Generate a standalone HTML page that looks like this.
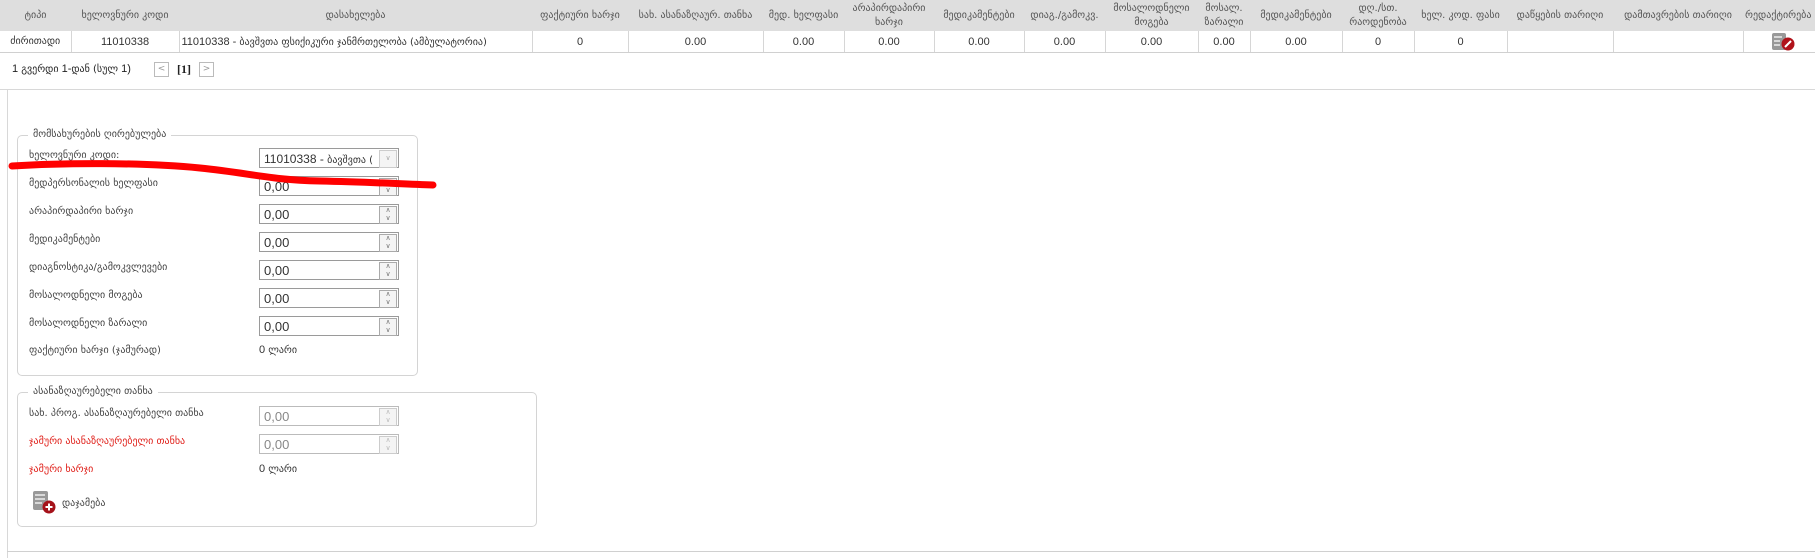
<!DOCTYPE html>
<html><head><meta charset="utf-8"><style>
body{margin:0;width:1815px;height:558px;background:#fff;font-family:"DejaVu Sans","Liberation Sans",sans-serif;position:relative;overflow:hidden;color:#333}
.a{position:absolute}
table{position:absolute;left:0;top:0;border-collapse:collapse;table-layout:fixed;width:1815px}
th{background:#dedede;color:#555;font-weight:normal;font-size:10px;height:31px;padding:0 2px;text-align:center;line-height:14px;overflow:hidden;white-space:nowrap}
td{height:21px;border-right:1px solid #d6d6d6;border-bottom:1px solid #d0d0d0;font-size:11px;text-align:center;padding:0 2px;white-space:nowrap;overflow:hidden;font-family:"Liberation Sans","DejaVu Sans",sans-serif}
td.g{font-family:"DejaVu Sans",sans-serif;font-size:10px}
.fs{position:absolute;border:1px solid #d4d4d4;border-radius:5px}
.lg{position:absolute;background:#fff;padding:0 5px;font-size:10px;color:#444}
.lb{position:absolute;font-size:10px;color:#444;left:29px}
.in{position:absolute;left:259px;width:134px;height:18px;border:1px solid #9a9a9a;font:13px "Liberation Sans",sans-serif;color:#333;line-height:20px;padding-left:4px;box-sizing:content-box}
.sp{position:absolute;right:1px;top:1px;width:16px;height:16px;border:1px solid #aaa;background:#f4f4f4;font-size:7px;line-height:8px;text-align:center;color:#777}
.dis{color:#888;border-color:#bbb}
</style></head><body>
<table>
<colgroup><col style="width:71px"><col style="width:108px"><col style="width:353px"><col style="width:96px"><col style="width:135px"><col style="width:81px"><col style="width:90px"><col style="width:90px"><col style="width:81px"><col style="width:93px"><col style="width:52px"><col style="width:92px"><col style="width:72px"><col style="width:93px"><col style="width:106px"><col style="width:130px"><col style="width:72px"></colgroup>
<tr><th>ტიპი</th><th>ხელოვნური კოდი</th><th>დასახელება</th><th>ფაქტიური ხარჯი</th><th>სახ. ასანაზღაურ. თანხა</th><th>მედ. ხელფასი</th><th>არაპირდაპირი<br>ხარჯი</th><th>მედიკამენტები</th><th>დიაგ./გამოკვ.</th><th>მოსალოდნელი<br>მოგება</th><th>მოსალ.<br>ზარალი</th><th>მედიკამენტები</th><th>დღ./სთ.<br>რაოდენობა</th><th>ხელ. კოდ. ფასი</th><th>დაწყების თარიღი</th><th>დამთავრების თარიღი</th><th style="text-align:left">რედაქტირება</th></tr>
<tr><td class="g">ძირითადი</td><td>11010338</td><td style="text-align:left">11010338 - <span style="font-family:'DejaVu Sans';font-size:10px">ბავშვთა ფსიქიკური ჯანმრთელობა (ამბულატორია)</span></td><td>0</td><td>0.00</td><td>0.00</td><td>0.00</td><td>0.00</td><td>0.00</td><td>0.00</td><td>0.00</td><td>0.00</td><td>0</td><td>0</td><td></td><td></td><td style="border-right:none"></td></tr>
</table>
<svg class="a" style="left:1771px;top:32px" width="24" height="19"><rect x="1" y="1" width="14" height="17" rx="2" fill="#999"/><g stroke="#eee" stroke-width="1.5"><line x1="3" y1="5" x2="11" y2="5"/><line x1="3" y1="9" x2="9" y2="9"/><line x1="3" y1="13" x2="9" y2="13"/></g><circle cx="17" cy="12" r="6.5" fill="#b0121a"/><line x1="14" y1="15" x2="20" y2="9" stroke="#fff" stroke-width="2"/></svg>
<div class="a" style="left:12px;top:63px;font-size:11px;font-family:'Liberation Sans','DejaVu Sans',sans-serif;color:#222">1 <span style="font-family:'DejaVu Sans';font-size:10px">გვერდი</span> 1-<span style="font-family:'DejaVu Sans';font-size:10px">დან (სულ</span> 1)</div>
<div class="a" style="left:154px;top:62px;width:13px;height:13px;border:1px solid #bbb;font-size:9px;color:#999;text-align:center;line-height:13px">&lt;</div>
<div class="a" style="left:177px;top:62px;font:bold 12px 'Liberation Serif',serif;color:#222">[1]</div>
<div class="a" style="left:199px;top:62px;width:13px;height:13px;border:1px solid #bbb;font-size:9px;color:#999;text-align:center;line-height:13px">&gt;</div>
<div class="a" style="left:0;top:89px;width:1815px;height:1px;background:#d8d8d8"></div>
<div class="a" style="left:7px;top:90px;width:1px;height:468px;background:#d8d8d8"></div>
<div class="a" style="left:7px;top:551px;width:1808px;height:1px;background:#d0d0d0"></div>

<div class="fs" style="left:17px;top:135px;width:399px;height:239px"></div>
<div class="lg" style="left:28px;top:129px">მომსახურების ღირებულება</div>
<div class="lb" style="top:150px">ხელოვნური კოდი:</div>
<div class="in" style="top:148px;font-size:12px">11010338 - <span style="font-family:'DejaVu Sans';font-size:10px">ბავშვთა (</span><div class="sp" style="border-color:#ccc;color:#aaa;line-height:16px">∨</div></div>
<div class="lb" style="top:178px">მედპერსონალის ხელფასი</div>
<div class="in" style="top:176px">0,00<div class="sp">∧<br>∨</div></div>
<div class="lb" style="top:206px">არაპირდაპირი ხარჯი</div>
<div class="in" style="top:204px">0,00<div class="sp">∧<br>∨</div></div>
<div class="lb" style="top:234px">მედიკამენტები</div>
<div class="in" style="top:232px">0,00<div class="sp">∧<br>∨</div></div>
<div class="lb" style="top:262px">დიაგნოსტიკა/გამოკვლევები</div>
<div class="in" style="top:260px">0,00<div class="sp">∧<br>∨</div></div>
<div class="lb" style="top:290px">მოსალოდნელი მოგება</div>
<div class="in" style="top:288px">0,00<div class="sp">∧<br>∨</div></div>
<div class="lb" style="top:318px">მოსალოდნელი ზარალი</div>
<div class="in" style="top:316px">0,00<div class="sp">∧<br>∨</div></div>
<div class="lb" style="top:345px">ფაქტიური ხარჯი (ჯამურად)</div>
<div class="a" style="left:259px;top:344px;font-size:11px;font-family:'Liberation Sans','DejaVu Sans';color:#333">0 <span style="font-family:'DejaVu Sans';font-size:10px">ლარი</span></div>

<div class="fs" style="left:17px;top:392px;width:518px;height:133px"></div>
<div class="lg" style="left:28px;top:386px">ასანაზღაურებელი თანხა</div>
<div class="lb" style="top:408px">სახ. პროგ. ასანაზღაურებელი თანხა</div>
<div class="in dis" style="top:406px">0,00<div class="sp" style="border-color:#ccc;color:#bbb">∧<br>∨</div></div>
<div class="lb" style="top:436px;color:#e0201a">ჯამური ასანაზღაურებელი თანხა</div>
<div class="in dis" style="top:434px">0,00<div class="sp" style="border-color:#ccc;color:#bbb">∧<br>∨</div></div>
<div class="lb" style="top:464px;color:#e0201a">ჯამური ხარჯი</div>
<div class="a" style="left:259px;top:463px;font-size:11px;font-family:'Liberation Sans','DejaVu Sans';color:#333">0 <span style="font-family:'DejaVu Sans';font-size:10px">ლარი</span></div>
<svg class="a" style="left:32px;top:490px" width="24" height="24"><rect x="1" y="1" width="15" height="19" rx="2" fill="#999"/><g stroke="#eee" stroke-width="1.5"><line x1="3" y1="5" x2="13" y2="5"/><line x1="3" y1="9" x2="13" y2="9"/><line x1="3" y1="13" x2="10" y2="13"/></g><circle cx="17" cy="17" r="6.5" fill="#a5121a"/><path d="M17 13.5v7M13.5 17h7" stroke="#fff" stroke-width="2"/></svg>
<div class="a" style="left:62px;top:498px;font-size:10px;color:#444">დაჯამება</div>

<svg class="a" style="left:0;top:0" width="500" height="250"><path d="M12 166 C60 163 140 162 200 168 C250 173 270 180 320 181 C370 182 400 184 433 185" stroke="#f00" stroke-width="7" fill="none" stroke-linecap="round"/></svg>
</body></html>
